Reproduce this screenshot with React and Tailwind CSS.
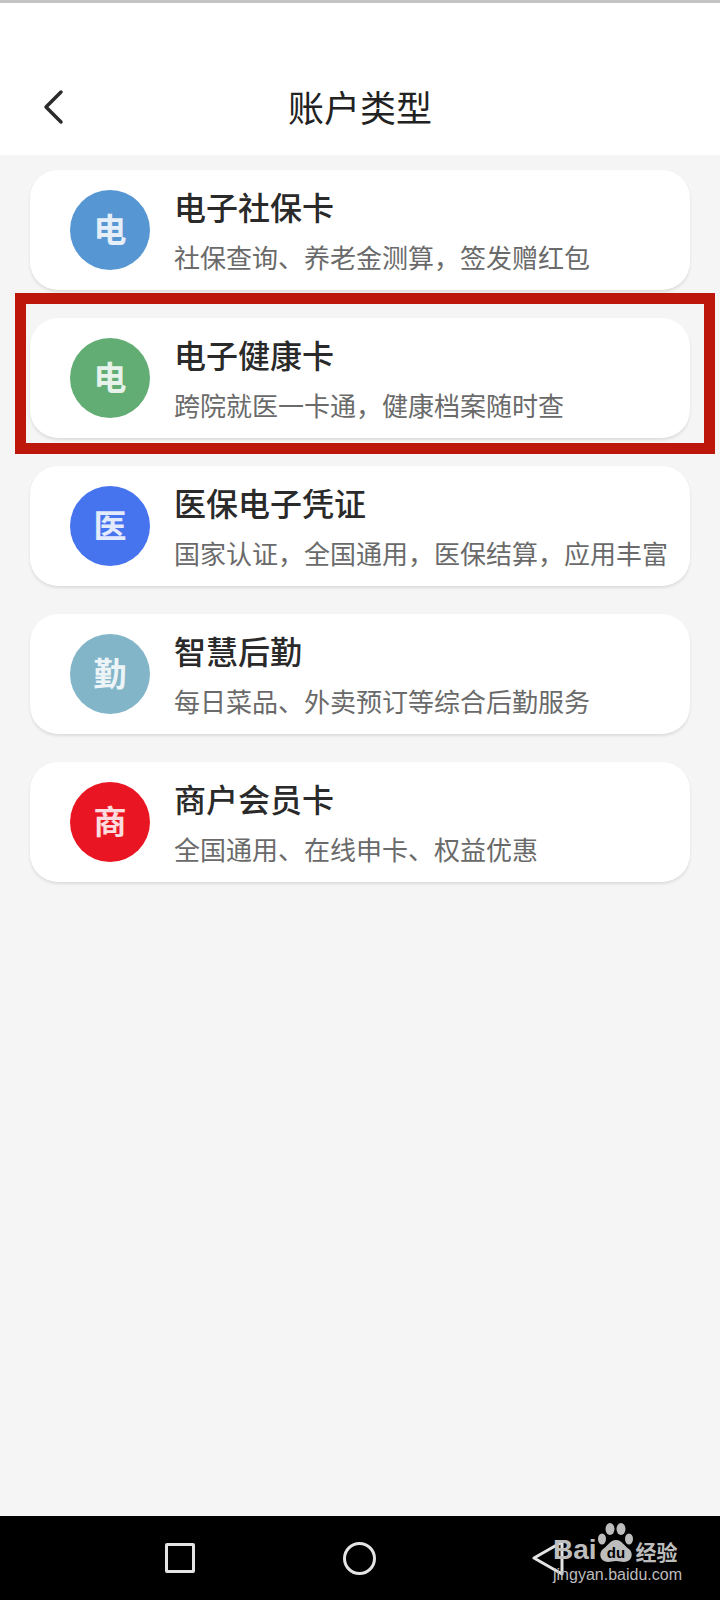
const cjk = 'font-["Noto_Sans_CJK_SC","Noto_Sans",sans-serif]';

const cards = [
  { letter: '电', color: 'bg-[#5596d3]', title: '电子社保卡', sub: '社保查询、养老金测算，签发赠红包' },
  { letter: '电', color: 'bg-[#62ad74]', title: '电子健康卡', sub: '跨院就医一卡通，健康档案随时查' },
  { letter: '医', color: 'bg-[#4673ee]', title: '医保电子凭证', sub: '国家认证，全国通用，医保结算，应用丰富' },
  { letter: '勤', color: 'bg-[#83b5c9]', title: '智慧后勤', sub: '每日菜品、外卖预订等综合后勤服务' },
  { letter: '商', color: 'bg-[#ea1522]', title: '商户会员卡', sub: '全国通用、在线申卡、权益优惠' },
];

function Card({ card }) {
  return (
    <div className="h-[120px] rounded-[28px] bg-white shadow-[0_2px_3px_rgba(0,0,0,0.1)] flex items-center pl-10 gap-6">
      <div className={`w-20 h-20 rounded-full shrink-0 flex items-center justify-center pb-[3px] text-[33px] font-bold text-white/85 ${card.color}`}>
        {card.letter}
      </div>
      <div className="flex flex-col gap-[12px]">
        <div className="text-[32px] leading-[42px] font-medium text-[#2a2a2a]">{card.title}</div>
        <div className="text-[26px] leading-[36px] text-[#6a6a6a]">{card.sub}</div>
      </div>
    </div>
  );
}

function Watermark() {
  return (
    <div className="absolute left-[553px] top-[1522px] w-[130px] text-[#bdbdbd] pointer-events-none">
      <div className="flex items-end h-[42px]">
        <span className="font-['Liberation_Sans',sans-serif] font-bold text-[28px] leading-[28px]">Bai</span>
        <svg width="40" height="42" viewBox="0 0 40 42" className="shrink-0 -ml-[1px]">
          <ellipse cx="6" cy="17" rx="4" ry="5.5" fill="#bdbdbd" />
          <ellipse cx="14" cy="7" rx="4.5" ry="6" fill="#bdbdbd" />
          <ellipse cx="25" cy="7" rx="4.5" ry="6" fill="#bdbdbd" />
          <ellipse cx="33" cy="17" rx="4" ry="5.5" fill="#bdbdbd" />
          <path d="M20 18c6 0 8 6 13 9 5 4 3 13-5 13-3 0-5-1-8-1s-5 1-8 1c-8 0-10-9-5-13 5-3 7-9 13-9z" fill="#bdbdbd" />
          <text x="20" y="36" textAnchor="middle" fontSize="15" fontWeight="700" fontFamily="Liberation Sans, sans-serif" fill="#000">du</text>
        </svg>
        <span className="text-[21px] leading-[26px] font-bold whitespace-nowrap">经验</span>
      </div>
      <div className="font-['Liberation_Sans',sans-serif] text-[16px] leading-[24px] mt-[-1px] whitespace-nowrap">jingyan.baidu.com</div>
    </div>
  );
}

export default function App() {
  return (
    <div className={`relative w-[720px] h-[1600px] flex flex-col bg-[#f5f5f5] overflow-hidden ${cjk}`}>
      {/* Header */}
      <div className="h-[3px] bg-[#c4c4c4]" />
      <div className="relative h-[152px] bg-white flex items-end justify-center pb-[24px]">
        <svg className="absolute left-[42px] top-[86px]" width="22" height="36" viewBox="0 0 22 36" fill="none" stroke="#2b2b2b" strokeWidth="3.5" strokeLinecap="round" strokeLinejoin="round">
          <path d="M19 3 4 18l15 15" />
        </svg>
        <div className="text-[36px] leading-[50px] text-[#222]">账户类型</div>
      </div>

      {/* Cards */}
      <div className="flex-1 flex flex-col gap-7 px-[30px] pt-[15px]">
        {cards.map((c) => <Card key={c.title} card={c} />)}
      </div>

      {/* Red highlight box */}
      <div className="absolute left-[15px] top-[293px] w-[700px] h-[161px] border-[11px] border-[#bd170b]" />

      {/* Nav bar */}
      <div className="h-[84px] bg-black flex items-center pl-[165px]">
        <div className="w-[30px] h-[30px] rounded-[2px] border-[3px] border-[#e4e4e4]" />
        <div className="w-[33px] h-[33px] rounded-full border-[3px] border-[#e4e4e4] ml-[148px]" />
        <svg className="ml-[156px]" width="32" height="36" viewBox="0 0 32 36" fill="none" stroke="#e4e4e4" strokeWidth="3" strokeLinejoin="round">
          <path d="M30 2v32L2 18z" />
        </svg>
      </div>
      <Watermark />
    </div>
  );
}
